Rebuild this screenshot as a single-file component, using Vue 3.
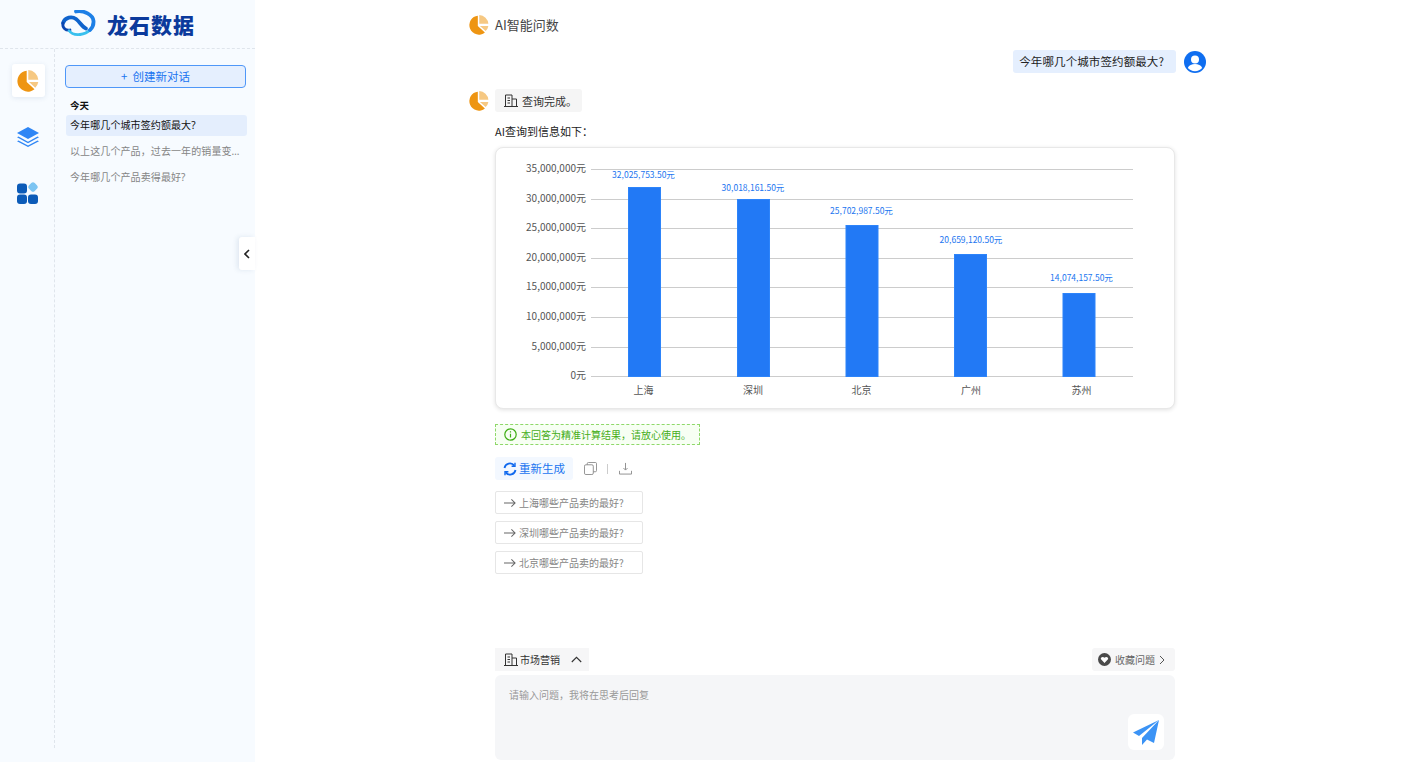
<template>
  <div class="page">
    <aside class="sidebar">
      <div class="logo">
        <svg class="logo-mark" width="38" height="28" viewBox="0 0 38 28">
          <path d="M3 13C5 7 12 6 16 9c4 3 6 8 10 9.500" fill="none" stroke="#0f63cc" stroke-width="3.800" stroke-linecap="round" />
          <path d="M3 13c-1 5 3 8 7 7" fill="none" stroke="#0b46b0" stroke-width="2.800" stroke-linecap="round" />
          <path d="M20 24.500c-5 .5-9-1-11-4" fill="none" stroke="#38c0ee" stroke-width="2.600" stroke-linecap="round" />
          <path d="M30 20c-3 3-6 4-10 4.500" fill="none" stroke="#38c0ee" stroke-width="3" stroke-linecap="round" />
          <path d="M16 1.500C24 0 33 5 33.500 11c.3 4-1.500 7-3.500 9" fill="none" stroke="#1d7fe6" stroke-width="3.800" stroke-linecap="round" />
        </svg>
        <span class="logo-text">龙石数据</span>
      </div>
      <div class="side-body">
        <nav class="rail">
          <div class="rail-item active">
            <svg width="22" height="22" viewBox="0 0 22 22">
              <path d="M9.700.7a10.500 10.500 0 1 0 7.800 18.600L9.700 12z" fill="#ee9512" />
              <path d="M11.300 0a10.500 10.500 0 0 1 10 9.700h-10zM12 12h9.300a10.500 10.500 0 0 1-3 5.700z" fill="#f6c882" />
            </svg>
          </div>
          <div class="rail-item">
            <svg width="22" height="20" viewBox="0 0 22 20">
              <path d="M11 0 22 6 11 12 0 6z" fill="#2f86f5" />
              <path d="M1.500 9.500 0 10.300 11 16.300 22 10.300 20.500 9.500 11 14.700z" fill="#2f86f5" />
              <path d="M1.500 13.500 0 14.300 11 20 22 14.300 20.500 13.500 11 18.400z" fill="#2f86f5" />
            </svg>
          </div>
          <div class="rail-item">
            <svg width="22" height="22" viewBox="0 0 22 22">
              <rect x="0" y="1.500" width="10" height="10" rx="3" fill="#0c5bb8" />
              <rect x="12" y="1" width="8" height="8" rx="2.500" transform="rotate(45 16 5)" fill="#7cc4f2" />
              <rect x="0" y="12.500" width="10" height="9.500" rx="3" fill="#0c5bb8" />
              <rect x="11" y="12.500" width="10" height="9.500" rx="3" fill="#0c5bb8" />
            </svg>
          </div>
        </nav>
        <div class="history">
          <button class="new-chat">+&nbsp;&nbsp;创建新对话</button>
          <div class="history-label">今天</div>
          <div
            v-for="(item, i) in history"
            :key="item"
            class="history-item"
            :class="{ current: i === 0 }"
          >{{ item }}</div>
        </div>
      </div>
      <div class="collapse">
        <svg width="6" height="10" viewBox="0 0 6 10">
          <path d="M5 1 1 5l4 4" fill="none" stroke="#222" stroke-width="1.600" />
        </svg>
      </div>
    </aside>

    <main class="main">
      <div class="thread">
        <div class="title-row">
          <svg class="avatar" width="20" height="20" viewBox="0 0 22 22">
            <path d="M9.700.7a10.500 10.500 0 1 0 7.800 18.600L9.700 12z" fill="#ee9512" />
            <path d="M11.300 0a10.500 10.500 0 0 1 10 9.700h-10zM12 12h9.300a10.500 10.500 0 0 1-3 5.700z" fill="#f6c882" />
          </svg>
          <span class="title">AI智能问数</span>
        </div>

        <div class="user-row">
          <div class="user-bubble">今年哪几个城市签约额最大?</div>
          <svg width="22" height="22" viewBox="0 0 22 22">
            <circle cx="11" cy="11" r="11" fill="#0f6ef0" />
            <circle cx="11" cy="8.500" r="4" fill="#fff" />
            <path d="M3.800 17c1.200-3 4-4 7.200-4s6 1 7.200 4c-1.800 2-4.300 3.200-7.200 3.200S5.600 19 3.800 17z" fill="#fff" />
          </svg>
        </div>

        <div class="status-row">
          <svg class="avatar" width="20" height="20" viewBox="0 0 22 22">
            <path d="M9.700.7a10.500 10.500 0 1 0 7.800 18.600L9.700 12z" fill="#ee9512" />
            <path d="M11.300 0a10.500 10.500 0 0 1 10 9.700h-10zM12 12h9.300a10.500 10.500 0 0 1-3 5.700z" fill="#f6c882" />
          </svg>
          <div class="status">
            <svg width="14" height="13" viewBox="0 0 14 13" fill="none" stroke="#333" stroke-width="1">
              <path d="M1.500 12V1h6.500v11M8 5h4.500v7M0 12.500h14M3.500 4h2.500M3.500 6.500h2.500M3.500 9h2.500" />
            </svg>
            <span>查询完成。</span>
          </div>
        </div>

        <div class="answer">
          <div class="answer-lead">AI查询到信息如下：</div>
          <div class="chart-card">
            <svg width="678" height="260" viewBox="0 0 678 260">
              <g v-for="t in ticks" :key="t.label">
                <line x1="95" x2="637" :y1="t.y" :y2="t.y" class="grid" />
                <text x="90" :y="t.y + 2.500" text-anchor="end" class="axis-text">{{ t.label }}</text>
              </g>
              <g v-for="b in bars" :key="b.city">
                <rect :x="b.x - 16" :y="b.y" width="32" :height="228.500 - b.y" fill="#2279f5" stroke="#2d84fa" />
                <text :x="b.labelX" :y="b.valueY" text-anchor="middle" class="value-text">{{ b.value }}</text>
                <text :x="b.labelX" y="246" text-anchor="middle" class="axis-text city">{{ b.city }}</text>
              </g>
            </svg>
          </div>

          <div class="notice">
            <svg width="13" height="13" viewBox="0 0 13 13" fill="none" stroke="#3fae14" stroke-width="1.200">
              <circle cx="6.500" cy="6.500" r="5.700" />
              <path d="M6.500 5.700v3.800M6.500 3.300v1.200" />
            </svg>
            <span>本回答为精准计算结果，请放心使用。</span>
          </div>

          <div class="actions">
            <button class="regen">
              <svg width="14" height="14" viewBox="0 0 14 14" fill="none" stroke="#1069ee" stroke-width="1.800">
                <path d="M1.500 6a5.500 5.500 0 0 1 9.800-2.400M12.500 8a5.500 5.500 0 0 1-9.800 2.400" />
                <path d="M12 .8v3.400H8.600M2 13.200V9.800h3.400" stroke-width="1.400" />
              </svg>
              <span class="regen-text">重新生成</span>
            </button>
            <svg class="tool" width="13" height="13" viewBox="0 0 14 14" fill="none" stroke="#8a8a8a">
              <rect x=".5" y="3" width="9.500" height="10.500" rx="1.500" />
              <path d="M3.500 3V1.800A1.300 1.300 0 0 1 4.800.5h7.400a1.300 1.300 0 0 1 1.300 1.300v7.400a1.300 1.300 0 0 1-1.300 1.300H10" />
            </svg>
            <span class="sep"></span>
            <svg class="tool" width="13" height="13" viewBox="0 0 14 14" fill="none" stroke="#8a8a8a">
              <path d="M7 1v7.500M4.800 6.500 7 8.700l2.200-2.200M.5 9.500v3.500h13V9.500" />
            </svg>
          </div>

          <div class="suggestions">
            <div v-for="s in suggestions" :key="s" class="suggestion">
              <svg width="12" height="10" viewBox="0 0 13 10" fill="none" stroke="#666" stroke-width="1.100">
                <path d="M0 5h12M8 1l4 4-4 4" />
              </svg>
              <span>{{ s }}</span>
            </div>
          </div>
        </div>
      </div>

      <div class="composer">
        <div class="composer-top">
          <div class="scene">
            <svg width="14" height="13" viewBox="0 0 14 13" fill="none" stroke="#333" stroke-width="1">
              <path d="M1.500 12V1h6.500v11M8 5h4.500v7M0 12.500h14M3.500 4h2.500M3.500 6.500h2.500M3.500 9h2.500" />
            </svg>
            <span>市场营销</span>
            <svg class="chev" width="11" height="7" viewBox="0 0 11 7" fill="none" stroke="#333" stroke-width="1.100">
              <path d="M.8 6 5.500 1.300 10.200 6" />
            </svg>
          </div>
          <div class="favorites">
            <svg width="13" height="13" viewBox="0 0 13 13">
              <circle cx="6.500" cy="6.500" r="6.500" fill="#4a4a4a" />
              <path d="M6.500 10 3 6.300c-1-1.700 1.800-3.400 3.500-1.500 1.700-1.900 4.500-.2 3.500 1.500z" fill="#fff" />
            </svg>
            <span>收藏问题</span>
            <svg width="6" height="10" viewBox="0 0 6 10" fill="none" stroke="#555" stroke-width="1">
              <path d="m1 1 4 4-4 4" />
            </svg>
          </div>
        </div>
        <div class="input-box">
          <span class="placeholder">请输入问题，我将在思考后回复</span>
          <div class="send">
            <svg width="26" height="25" viewBox="0 0 26 25">
              <path d="M26 0 0 12.500l6 3.500z" fill="#3b93f5" />
              <path d="M26 0 9 18v7l5-5.500 7 3.500z" fill="#3b93f5" />
            </svg>
          </div>
        </div>
      </div>
    </main>
  </div>
</template>

<script setup>
const history = ['今年哪几个城市签约额最大?', '以上这几个产品，过去一年的销量变化趋势如何?', '今年哪几个产品卖得最好?']

const ticks = [
  { label: '35,000,000元', y: 21.500 },
  { label: '30,000,000元', y: 51.500 },
  { label: '25,000,000元', y: 80.500 },
  { label: '20,000,000元', y: 110.500 },
  { label: '15,000,000元', y: 139.500 },
  { label: '10,000,000元', y: 169.500 },
  { label: '5,000,000元', y: 199.500 },
  { label: '0元', y: 228.500 },
]

const bars = [
  { city: '上海', value: '32,025,753.50元', x: 148.500, labelX: 147.500, y: 39.500, valueY: 30 },
  { city: '深圳', value: '30,018,161.50元', x: 257.500, labelX: 257, y: 51.500, valueY: 43 },
  { city: '北京', value: '25,702,987.50元', x: 366, labelX: 365.500, y: 77.500, valueY: 66 },
  { city: '广州', value: '20,659,120.50元', x: 474.500, labelX: 475, y: 106.500, valueY: 95 },
  { city: '苏州', value: '14,074,157.50元', x: 583, labelX: 585.500, y: 145.500, valueY: 133 },
]

const suggestions = ['上海哪些产品卖的最好?', '深圳哪些产品卖的最好?', '北京哪些产品卖的最好?']
</script>

<style scoped>
.page {
  display: flex;
  height: 762px;
  overflow: hidden;
  background: #fff;
  color: #222;
  font-family: "Noto Sans CJK SC", "Noto Sans", sans-serif;
  font-size: 12px;
}

.sidebar {
  position: relative;
  display: flex;
  flex-direction: column;
  flex: none;
  width: 255px;
  background: #f7fbff;
}

.logo {
  display: flex;
  align-items: center;
  gap: 9px;
  box-sizing: border-box;
  height: 49px;
  padding-left: 60px;
  border-bottom: 1px dashed #dfe5ec;
}

.logo-text {
  color: #0b3a9c;
  font-size: 21px;
  font-weight: 900;
  line-height: 28px;
  letter-spacing: 1px;
}

.side-body {
  display: flex;
  flex: 1;
}

.rail {
  display: flex;
  flex-direction: column;
  align-items: center;
  gap: 8px;
  box-sizing: border-box;
  flex: none;
  width: 55px;
  height: 699px;
  padding: 15px 0 0 2px;
  border-right: 1px dashed #dfe5ec;
}

.rail-item {
  display: flex;
  align-items: center;
  justify-content: center;
  width: 33px;
  height: 33px;
  margin-bottom: 15px;
  border-radius: 3px;
}

.rail-item.active {
  background: #fff;
  box-shadow: 0 1px 5px rgba(60, 90, 140, 0.12);
}

.history {
  flex: 1;
  min-width: 0;
  padding: 16px 9px 0 10px;
}

.new-chat {
  display: block;
  width: 181px;
  height: 23px;
  padding: 0 0 2px;
  border: 1px solid #4f97f8;
  border-radius: 4px;
  background: #e5effe;
  color: #1a75f0;
  font: inherit;
  font-size: 11.500px;
}

.history-label {
  margin: 9px 0 2px 5px;
  color: #111;
  font-size: 9.500px;
  font-weight: 700;
  line-height: 16px;
}

.history-item {
  box-sizing: border-box;
  width: 181px;
  height: 21px;
  margin: 0 0 5px 1px;
  padding: 0 5px 0 4px;
  overflow: hidden;
  border-radius: 3px;
  color: #858585;
  font-family: "Noto Sans", "Noto Sans CJK SC", sans-serif;
  font-size: 10px;
  line-height: 21px;
  letter-spacing: 0.1px;
  text-overflow: ellipsis;
  white-space: nowrap;
}

.history-item.current {
  background: #e4eefd;
  color: #111;
}

.collapse {
  position: absolute;
  top: 237px;
  right: 0;
  display: flex;
  align-items: center;
  justify-content: center;
  width: 16px;
  height: 33px;
  border-radius: 3px 0 0 3px;
  background: #fff;
  box-shadow: -2px 0 5px rgba(60, 90, 140, 0.12);
}

.main {
  display: flex;
  flex-direction: column;
  flex: 1;
  min-width: 0;
  padding-left: 214px;
}

.thread {
  flex: 1;
  width: 737px;
}

.title-row {
  display: flex;
  align-items: center;
  gap: 6px;
  height: 20px;
  padding-top: 15px;
}

.title {
  color: #444;
  font-size: 13px;
  line-height: 20px;
}

.avatar {
  flex: none;
}

.user-row {
  display: flex;
  align-items: center;
  justify-content: flex-end;
  gap: 8px;
  margin-top: 15px;
}

.user-bubble {
  padding: 0 12px 0 6px;
  border-radius: 3px;
  background: #e5effe;
  color: #222;
  font-size: 11.500px;
  line-height: 23px;
  letter-spacing: 0.1px;
}

.status-row {
  display: flex;
  align-items: center;
  gap: 6px;
  margin-top: 16px;
}

.status {
  display: flex;
  align-items: center;
  gap: 4px;
  height: 23px;
  padding: 0 5px 0 9px;
  border-radius: 3px;
  background: #f5f5f5;
  color: #333;
  font-size: 11px;
}

.answer {
  width: 680px;
  margin-left: 26px;
}

.answer-lead {
  margin-top: 10px;
  color: #222;
  font-size: 11px;
  line-height: 18px;
}

.chart-card {
  box-sizing: border-box;
  width: 680px;
  height: 262px;
  margin-top: 7px;
  border: 1px solid #e8e8e8;
  border-radius: 8px;
  background: #fff;
  box-shadow: 0 1px 4px rgba(0, 0, 0, 0.12);
}

.chart-card svg {
  display: block;
}

.grid {
  stroke: #cccccc;
  stroke-width: 1;
}

.axis-text {
  fill: #555;
  font-size: 10px;
}

.axis-text.city {
  font-size: 10px;
}

.value-text {
  fill: #1a75f0;
  font-size: 8.500px;
}

.notice {
  display: flex;
  align-items: center;
  gap: 4px;
  box-sizing: border-box;
  width: 205px;
  height: 21px;
  margin-top: 15px;
  padding-left: 8px;
  border: 1px dashed #8fd86a;
  background: #f7fff3;
  color: #45ad18;
  font-size: 10px;
}

.actions {
  display: flex;
  align-items: center;
  margin-top: 12px;
}

.regen {
  display: flex;
  align-items: center;
  gap: 2px;
  width: 78px;
  height: 23px;
  padding: 0 0 0 8px;
  border: none;
  border-radius: 3px;
  background: #f3f8ff;
  color: #1a75f0;
  font: inherit;
  font-size: 11.500px;
}

.regen-text {
  margin-bottom: 1px;
}

.tool {
  flex: none;
  margin-left: 11px;
}

.sep {
  width: 1px;
  height: 10px;
  margin-left: 10px;
  background: #ccc;
}

.tool + .sep + .tool {
  margin-left: 11px;
}

.suggestions {
  display: flex;
  flex-direction: column;
  gap: 7px;
  margin-top: 11px;
}

.suggestion {
  display: flex;
  align-items: center;
  gap: 3px;
  box-sizing: border-box;
  width: 148px;
  height: 23px;
  padding-left: 8px;
  border: 1px solid #e6e6e6;
  border-radius: 2px;
  color: #858585;
  font-size: 10px;
}

.composer {
  width: 680px;
  margin-left: 26px;
  padding-bottom: 2px;
}

.composer-top {
  display: flex;
  align-items: center;
  justify-content: space-between;
}

.scene {
  display: flex;
  align-items: center;
  gap: 2px;
  width: 94px;
  height: 23px;
  box-sizing: border-box;
  padding-left: 9px;
  background: #f6f6f7;
  color: #333;
  font-size: 10px;
}

.chev {
  margin-left: 9px;
}

.favorites {
  display: flex;
  align-items: center;
  gap: 4px;
  box-sizing: border-box;
  width: 83px;
  height: 23px;
  padding-left: 6px;
  border-radius: 3px;
  background: #f6f6f7;
  color: #666;
  font-size: 10px;
}

.input-box {
  position: relative;
  box-sizing: border-box;
  height: 85px;
  margin-top: 4px;
  padding: 10px 14px;
  border-radius: 6px;
  background: #f5f6f8;
}

.placeholder {
  color: #999;
  font-size: 10px;
}

.send {
  position: absolute;
  right: 11px;
  bottom: 10px;
  display: flex;
  align-items: center;
  justify-content: center;
  width: 36px;
  height: 36px;
  border-radius: 6px;
  background: #fff;
}
</style>
